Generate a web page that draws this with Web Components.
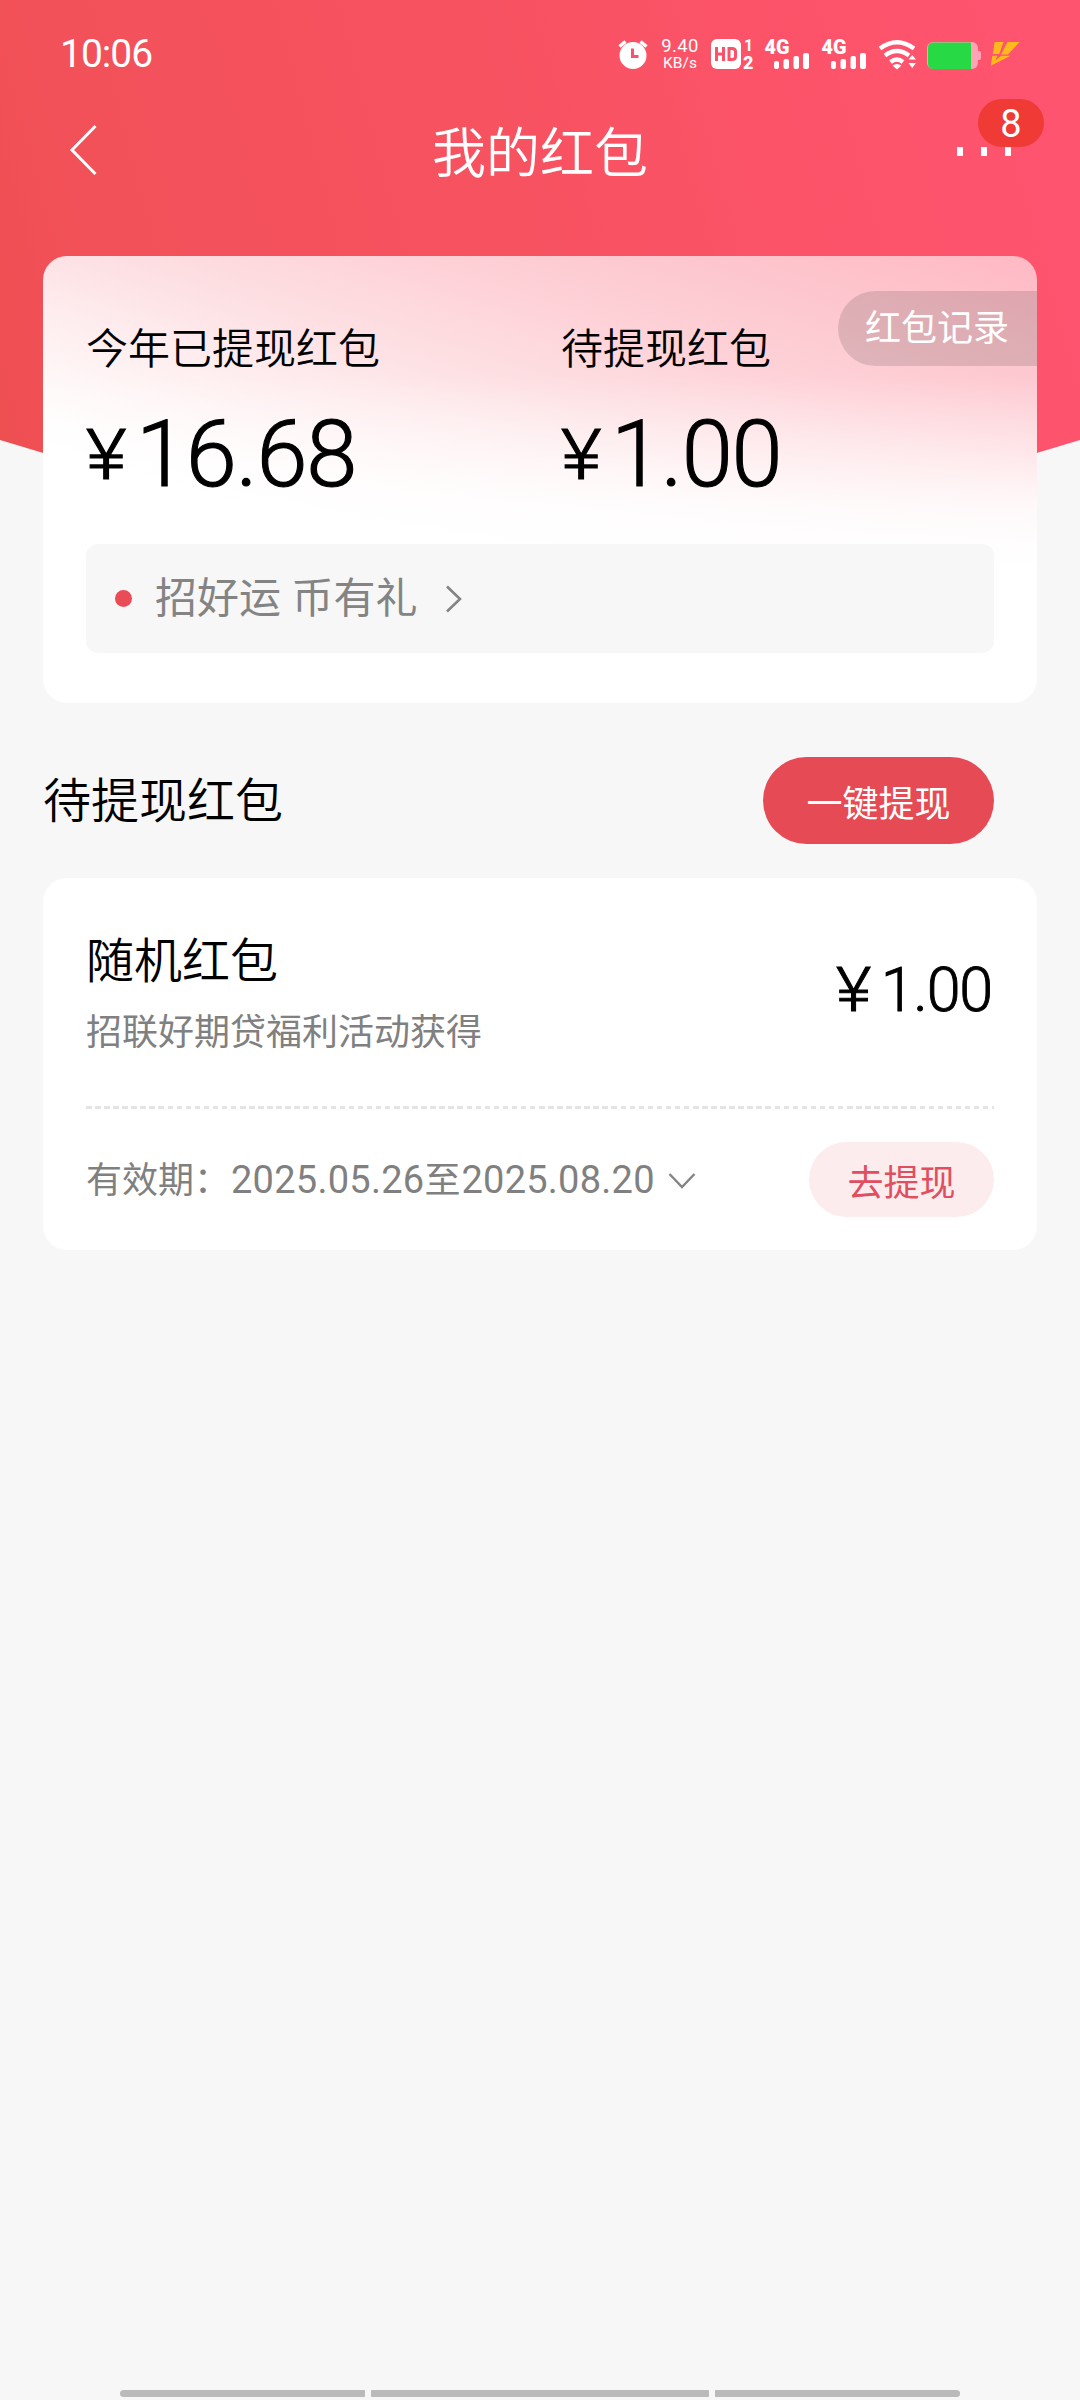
<!DOCTYPE html>
<html lang="zh-CN">
<head>
<meta charset="utf-8">
<title>我的红包</title>
<style>
html,body{margin:0;padding:0}
body{width:1080px;height:2400px;overflow:hidden;background:#f7f7f7;font-family:"Noto Sans CJK SC",sans-serif;color:#000}
</style>
</head>
<body>
<packet-page>
  <status-bar slot="top" time="10:06"></status-bar>
  <nav-header slot="top" badge="8">我的红包</nav-header>
  <summary-card>
    <stat-item label="今年已提现红包" value="16.68"></stat-item>
    <stat-item label="待提现红包" value="1.00"></stat-item>
    <span slot="tag">红包记录</span>
    <span slot="notice">招好运 币有礼</span>
  </summary-card>
  <section-head action="一键提现">待提现红包</section-head>
  <packet-card value="1.00" from="2025.05.26" to="2025.08.20">
    <span slot="title">随机红包</span>
    <span slot="desc">招联好期贷福利活动获得</span>
    <span slot="action">去提现</span>
  </packet-card>
  <gesture-bar slot="bottom"></gesture-bar>
</packet-page>
<script>
const define = (name, render) => customElements.define(name, class extends HTMLElement {
  constructor() { super(); this.attachShadow({ mode: 'open' }); }
  connectedCallback() { this.shadowRoot.innerHTML = render(this); }
});
const attr = (el, n) => el.getAttribute(n) || '';

define('packet-page', () => `<style>
:host{display:flex;flex-direction:column;width:1080px;height:2400px;position:relative;isolation:isolate}
.bg{position:absolute;inset:0 0 auto 0;height:520px;z-index:-1;
 background:linear-gradient(75deg,#ee4f50 0%,#f2515a 16%,#f75260 48%,#fd536b 80%,#ff5470 100%);
 clip-path:polygon(0 0,100% 0,100% 440px,870px 503px,210px 503px,0 440px)}
main{flex:1;display:flex;flex-direction:column;padding:52px 43px 0}
</style><div class="bg"></div><slot name="top"></slot><main><slot></slot></main><slot name="bottom"></slot>`);

const signal = `<svg width="44" height="32" viewBox="765 38 44 32"><text x="764.5" y="54" font-family="Roboto" font-weight="900" font-size="20" textLength="25" lengthAdjust="spacingAndGlyphs">4G</text><rect x="774" y="61" width="5" height="8" rx="2"/><rect x="783.5" y="59" width="5.5" height="10" rx="2"/><rect x="793.5" y="56" width="5.5" height="13" rx="2"/><rect x="803" y="53" width="6" height="16" rx="2"/></svg>`;

define('status-bar', el => `<style>
:host{display:flex;height:108px;color:#fff;font-family:Roboto,sans-serif;box-sizing:border-box;padding:38px 60px 0 60px;justify-content:space-between;align-items:flex-start}
.time{font-size:39px;line-height:33px;letter-spacing:-1px}
.tray{display:flex;height:32px;align-items:flex-start}
svg{display:block;fill:#fff;overflow:visible}
.speed{display:flex;flex-direction:column;align-items:center;width:42px;margin:0 10px 0 11px;font-size:18.500px;line-height:17px}
.speed span:first-child{letter-spacing:.4px}
.speed span:last-child{font-size:15.500px;line-height:16px}
</style>
<div class="time">${attr(el,'time')}</div>
<div class="tray">
<svg width="30" height="32" viewBox="618 38 30 32"><circle cx="633" cy="55.5" r="13.5"/><path d="M619.5 46.5l6-5M646.5 46.500l-6-5" stroke="#fff" stroke-width="3.5"/><path d="M632.500 48.500v8h6" fill="none" stroke="#fb526a" stroke-width="3"/></svg>
<div class="speed"><span>9.40</span><span>KB/s</span></div>
<svg width="43" height="32" viewBox="711 38 43 32"><rect x="711" y="39" width="30" height="30" rx="6"/><path d="M716.500 47v14M723.500 47v14M716.500 54h7" stroke="#fb526a" stroke-width="3" fill="none"/><path d="M729 48.500h3q3.500 0 3.500 3v5q0 3-3.500 3h-3z" fill="none" stroke="#fb526a" stroke-width="3"/><text x="744" y="51" font-family="Roboto" font-weight="700" font-size="16">1</text><text x="743" y="68.500" font-family="Roboto" font-weight="900" font-size="18">2</text></svg>
<div style="width:11px"></div>${signal}<div style="width:13px"></div>${signal}
<svg style="margin-left:12px" width="39" height="32" viewBox="878 38 39 32"><g fill="none" stroke="#fff" stroke-width="4.300"><path d="M880 48.500q17-12.500 34 0"/><path d="M885 55.500q12-9 24 0"/><path d="M890.500 62q6.500-5 12.500 0"/></g><path d="M892.500 65.500q4.500-3 9 0l-4.500 4z"/><path d="M908.500 59.500l3.700-4.500 3.700 4.500zM908.500 63l3.700 5 3.700-5z"/></svg>
<svg style="margin-left:10px" width="54" height="32" viewBox="927 38 54 32"><rect x="927" y="42" width="51" height="27" rx="6" fill="#ffa4b4"/><path d="M978 51h1.500q1.500 0 1.500 2v5q0 2-1.500 2H978z" fill="#ffa4b4"/><path d="M933.500 42.500H971v26.500h-37.500q-5.500 0-5.500-5.500V48q0-5.500 5.500-5.500z" fill="#27d945"/></svg>
<svg style="margin-left:9px" width="30" height="32" viewBox="990 38 30 32"><path d="M994.700 42h8.800l-4.300 12h-6.500zM1007.500 42H1019.500L1008 54.500h-7zM992.300 55.800h5.200l-2.300 5 5.800-5h9.500L990.800 65.800z" fill="#ffb91c"/></svg>
</div>`);

define('nav-header', el => `<style>
:host{display:flex;align-items:center;justify-content:space-between;height:96px;color:#fff;padding:0 69px 0 68px}
h1{margin:0;font-size:54px;font-weight:350;line-height:84px;margin-bottom:12px;margin-left:33px}
svg{display:block;margin-bottom:12px}
.more{position:relative;width:62px;height:96px;display:flex;gap:18px;align-items:flex-start;box-sizing:border-box;padding:39px 0 0 8px}
.more i{width:6px;height:9px;background:#fff}
b{position:absolute;left:29px;top:-9px;width:66px;height:48px;border-radius:24px;background:#ef3a35;font:400 38px/50px Roboto;text-align:center}
</style>
<svg width="30" height="54" viewBox="68 123 30 54"><path d="M95.500 126L72 150l23.500 24" fill="none" stroke="#fff" stroke-width="3"/></svg>
<h1><slot></slot></h1>
<div class="more"><i></i><i></i><i></i><b>${attr(el,'badge')}</b></div>`);

define('summary-card', () => `<style>
:host{display:block;position:relative;box-sizing:border-box;height:447px;padding:65px 43px 50px;border-radius:24px;overflow:hidden;
 background:linear-gradient(180deg,rgba(255,255,255,0) 120px,rgba(255,255,255,.45) 195px,rgba(255,255,255,.82) 250px,#fff 310px),
 linear-gradient(197deg,#ffb9c4 0,#fdcad1 130px,#fed2d8 190px,#fde0e3 275px,#feecee 340px,#fff7f7 405px,#fff 470px)}
.stats{display:grid;grid-template-columns:475px 1fr;height:168px;margin-bottom:55px}
.tag{position:absolute;right:0;top:35px;width:199px;height:75px;box-sizing:border-box;padding-left:27px;border-radius:38px 0 0 38px;background:rgba(0,0,0,.12);color:#fff;font-size:36px;line-height:69px;white-space:nowrap}
.notice{height:109px;border-radius:12px;background:#f7f7f7;display:flex;align-items:center;color:#848484;font-size:42px;line-height:60px;box-sizing:border-box;padding:0 0 0 29px}
.dot{width:17px;height:17px;border-radius:50%;background:#e94b57;margin-right:23px}
.notice span{margin-bottom:8px;word-spacing:1px}
svg{margin-left:28px}
</style>
<div class="stats"><slot></slot></div>
<div class="tag"><slot name="tag"></slot></div>
<div class="notice"><i class="dot"></i><span><slot name="notice"></slot></span>
<svg width="18" height="28" viewBox="0 0 18 28"><path d="M2 1.500l13 12.500L2 26.500" fill="none" stroke="#848484" stroke-width="2.600"/></svg></div>`);

define('stat-item', el => `<style>
:host{display:flex;flex-direction:column;gap:48px}
.l{font-size:42px;line-height:50px;font-weight:350}
money-text{--yen:70px;--num:92px;--box:50px;height:71px;-webkit-text-stroke:1.100px #000}
</style><div class="l">${attr(el,'label')}</div><money-text value="${attr(el,'value')}"></money-text>`);

define('money-text', el => `<style>
:host{display:flex;align-items:center;font-family:Roboto,sans-serif;font-weight:300;line-height:1}
.y{font-size:var(--yen);width:var(--box)}
.y i{display:inline-block;font-style:normal;transform:scaleX(1.12);transform-origin:0 50%}
.n{font-size:var(--num);letter-spacing:-1.200px;margin-right:2px}
</style><span class="y"><i>¥</i></span><span class="n">${attr(el,'value')}</span>`);

define('section-head', el => `<style>
:host{display:flex;align-items:center;justify-content:space-between;height:87px;margin:54px 43px 34px 0}
h2{margin:0 0 8px;font-size:48px;line-height:60px;font-weight:350}
button{all:unset;width:231px;height:87px;border-radius:44px;background:#e64a55;color:#fff;font-size:36px;line-height:80px;text-align:center}
</style><h2><slot></slot></h2><button>${attr(el,'action')}</button>`);

define('packet-card', el => `<style>
:host{display:flex;flex-direction:column;height:372px;box-sizing:border-box;background:#fff;border-radius:24px;padding:53px 43px 0}
.top{display:flex;justify-content:space-between;align-items:center;height:118px;margin-bottom:57px}
.t{font-size:48px;line-height:50px;font-weight:350;margin-bottom:27px}
.d{font-size:36px;line-height:40px;color:#808080}
money-text{--yen:61px;--num:61px;--box:45px;-webkit-text-stroke:.900px #000}
.rule{height:3px;background:repeating-linear-gradient(90deg,#e4e4e4 0 5.500px,transparent 5.500px 9.060px)}
.foot{display:flex;align-items:center;height:75px;margin-top:33px;color:#808080}
.v{display:flex;align-items:baseline;font-size:36px;line-height:40px;margin-bottom:3px;white-space:nowrap}
.v span{font:400 38px/40px Roboto;letter-spacing:.25px;margin-left:1px}
.chev{margin:2px auto 0 13px}
button{all:unset;width:185px;height:75px;border-radius:38px;background:#fcecee;color:#e04f5f;font-size:36px;line-height:68px;text-align:center}
</style>
<div class="top"><div><div class="t"><slot name="title"></slot></div><div class="d"><slot name="desc"></slot></div></div><money-text value="${attr(el,'value')}"></money-text></div>
<div class="rule"></div>
<div class="foot"><div class="v">有效期：<span>${attr(el,'from')}</span>至<span>${attr(el,'to')}</span></div>
<svg class="chev" width="28" height="18" viewBox="0 0 28 18"><path d="M1.500 2L14 15 26.500 2" fill="none" stroke="#848484" stroke-width="2.400"/></svg>
<button><slot name="action"></slot></button></div>`);

define('gesture-bar', () => `<style>
:host{display:flex;gap:6px;height:7px;padding:0 120px 3px}
i{background:#bababa;border-radius:1px;flex:245 0 0}
i:nth-of-type(2){flex-grow:338}
i:first-of-type{border-radius:4px 1px 1px 4px}
i:last-of-type{border-radius:1px 4px 4px 1px}
</style><i></i><i></i><i></i>`);
</script>
</body>
</html>
